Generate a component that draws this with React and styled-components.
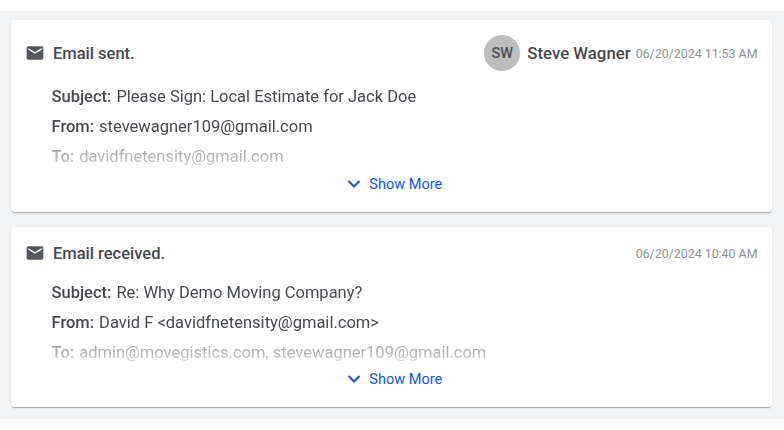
import React from "react";
import styled, { createGlobalStyle } from "styled-components";

const Global = createGlobalStyle`
  html, body { margin: 0; padding: 0; background: #fff; }
  body { font-family: Roboto, "Liberation Sans", sans-serif; }
`;
const Page = styled.main`
  margin-top: 11px;
  background: #f2f3f5;
  padding: 9px 12px 12px 11px;
  display: flex;
  flex-direction: column;
  gap: 15px;
  height: 408px;
  box-sizing: border-box;
`;
const Card = styled.article`
  background: #fff;
  border-radius: 4px;
  padding: 15px 14.5px 16px 16px;
  box-shadow: 0 2px 1px -1px rgba(0,0,0,.2), 0 1px 1px 0 rgba(0,0,0,.1), 0 1px 3px 0 rgba(0,0,0,.08);
`;
const Header = styled.header`
  display: flex;
  align-items: center;
  justify-content: space-between;
  min-height: 22px;
  margin-bottom: ${p => p.$gap}px;
`;
const Title = styled.div`
  display: flex;
  align-items: center;
  gap: 8px;
  font-size: 16.5px;
  font-weight: 500;
  color: #45484d;
`;
const Meta = styled.div`
  display: flex;
  align-items: center;
`;
const Avatar = styled.div`
  width: 36px;
  height: 36px;
  border-radius: 50%;
  background: #bdbdbd;
  color: #4b4e53;
  font-size: 14.5px;
  font-weight: 500;
  display: flex;
  align-items: center;
  justify-content: center;
  margin-right: 7px;
`;
const Author = styled.span`
  font-size: 16.8px;
  font-weight: 500;
  color: #45484d;
  margin-right: 5px;
`;
const Time = styled.span`
  font-size: 12.4px;
  color: #8d9096;
`;
const Body = styled.div`
  padding-left: 24.5px;
  height: ${p => p.$height}px;
  overflow: hidden;
  -webkit-mask-image: linear-gradient(to bottom, #000 60px, rgba(0,0,0,.5) 67px, rgba(0,0,0,.4) 76px, rgba(0,0,0,.1) 88px);
  mask-image: linear-gradient(to bottom, #000 60px, rgba(0,0,0,.5) 67px, rgba(0,0,0,.4) 76px, rgba(0,0,0,.1) 88px);
`;
const Row = styled.div`
  height: 30px;
  line-height: 30px;
  font-size: 16.5px;
  color: #45484d;
  white-space: nowrap;
`;
const Label = styled.b`
  font-weight: 500;
  margin-right: 5px;
`;
const More = styled.button`
  display: flex;
  align-items: center;
  justify-content: center;
  gap: 8px;
  width: 100%;
  height: 24px;
  padding: 0 0 0 5px;
  border: 0;
  background: none;
  color: #0b57f0;
  font: 400 14.5px Roboto, sans-serif;
`;

const MailIcon = () => (
  <svg width="20" height="20" viewBox="0 0 24 24" fill="#54575d" style={{ marginLeft: "-2px" }}>
    <path d="M20 4H4c-1.1 0-2 .9-2 2v12c0 1.1.9 2 2 2h16c1.1 0 2-.9 2-2V6c0-1.1-.9-2-2-2zm0 4-8 5-8-5V6l8 5 8-5v2z" />
  </svg>
);
const ChevronIcon = () => (
  <svg width="14" height="10" viewBox="0 0 14 10" fill="none" stroke="#0b57f0" strokeWidth="2">
    <path d="M1.5 2 7 7.5 12.5 2" />
  </svg>
);

const emails = [
  {
    title: "Email sent.", gap: 11, bodyHeight: 90, avatar: "SW", author: "Steve Wagner", time: "06/20/2024 11:53 AM",
    subject: "Please Sign: Local Estimate for Jack Doe", from: "stevewagner109@gmail.com", to: "davidfnetensity@gmail.com",
  },
  {
    title: "Email received.", gap: 14, bodyHeight: 89, time: "06/20/2024 10:40 AM",
    subject: "Re: Why Demo Moving Company?", from: "David F <davidfnetensity@gmail.com>", to: "admin@movegistics.com, stevewagner109@gmail.com",
  },
];

export default function App() {
  return (
    <>
      <Global />
      <Page>
        {emails.map(e => (
          <Card key={e.title}>
            <Header $gap={e.gap}>
              <Title><MailIcon />{e.title}</Title>
              <Meta>
                {e.avatar && <Avatar>{e.avatar}</Avatar>}
                {e.author && <Author>{e.author}</Author>}
                <Time>{e.time}</Time>
              </Meta>
            </Header>
            <Body $height={e.bodyHeight}>
              <Row><Label>Subject:</Label>{e.subject}</Row>
              <Row><Label>From:</Label>{e.from}</Row>
              <Row><Label>To:</Label>{e.to}</Row>
            </Body>
            <More><ChevronIcon />Show More</More>
          </Card>
        ))}
      </Page>
    </>
  );
}
